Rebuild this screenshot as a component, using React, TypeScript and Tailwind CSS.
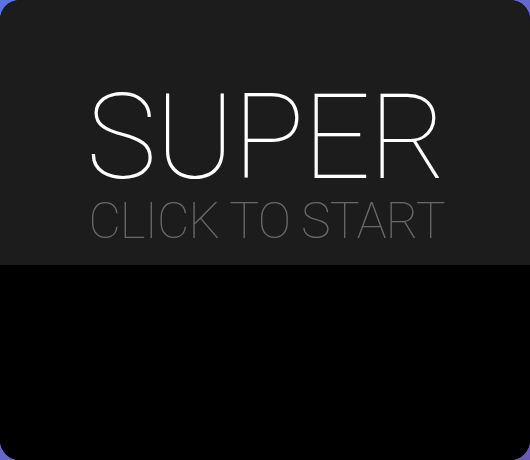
export default function App() {
  return (
    <div className="w-[530px] h-[460px] bg-gradient-to-br from-[#5a74e0] to-[#6c5ab8]">
      <div className="w-full h-full rounded-[20px] overflow-hidden flex flex-col bg-black">
        <div className="h-[265px] bg-[#1c1c1c] flex flex-col items-center pt-[79px]" style={{ fontFamily: "Roboto, sans-serif" }}>
          <div className="text-[119px] leading-[117px] font-thin text-white tracking-[-1.5px] pl-[2px]">SUPER</div>
          <div className="text-[50px] leading-[50px] font-thin text-[#6a6a6a] tracking-[-0.9px] pl-[3px]">CLICK TO START</div>
        </div>
        <div className="flex-1 bg-black" />
      </div>
    </div>
  );
}
